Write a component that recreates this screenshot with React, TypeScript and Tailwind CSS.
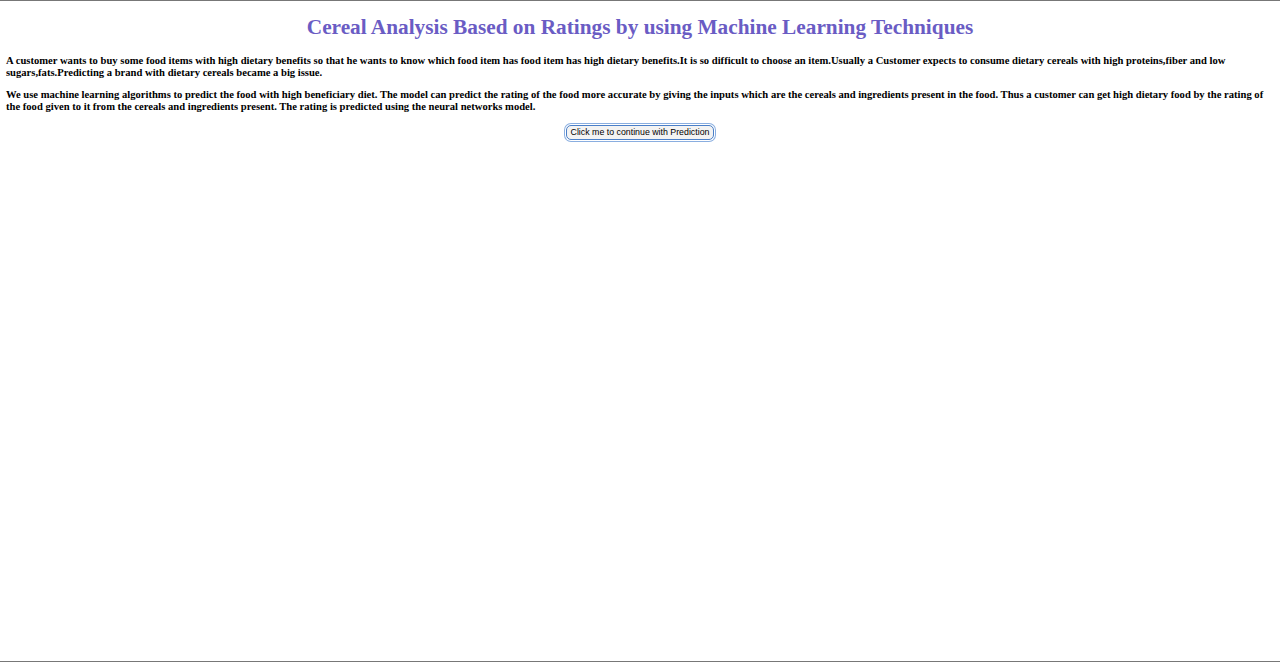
export default function App() {
  return (
    <div className="h-[662px] border-y border-[#777] bg-white font-['Liberation_Serif',serif] text-black">
      <h2 className="pt-[14px] text-center text-[21.3px] font-bold leading-[25px] text-[#6a5cc4]">
        Cereal Analysis Based on Ratings by using Machine Learning Techniques
      </h2>
      <div className="px-[6px] pt-[15px] text-[10.6px] font-bold leading-[12px]">
        <p>
          A customer wants to buy some food items with high dietary benefits so that he wants to know which food item has food item has high dietary benefits.It is so difficult to choose an item.Usually a Customer expects to consume dietary cereals with high proteins,fiber and low sugars,fats.Predicting a brand with dietary cereals became a big issue.
        </p>
        <p className="mt-[10px]">
          We use machine learning algorithms to predict the food with high beneficiary diet. The model can predict the rating of the food more accurate by giving the inputs which are the cereals and ingredients present in the food. Thus a customer can get high dietary food by the rating of the food given to it from the cereals and ingredients present. The rating is predicted using the neural networks model.
        </p>
      </div>
      <div className="mt-[12px] flex justify-center">
        <button className="h-[15px] rounded-[5px] border border-[#4a7fc8] bg-[#f3f3f3] px-[4px] font-['Liberation_Sans',sans-serif] text-[8.8px] leading-[11px] text-black shadow-[0_0_0_1px_#fff,0_0_0_2px_#8aaee0]">
          Click me to continue with Prediction
        </button>
      </div>
    </div>
  );
}
